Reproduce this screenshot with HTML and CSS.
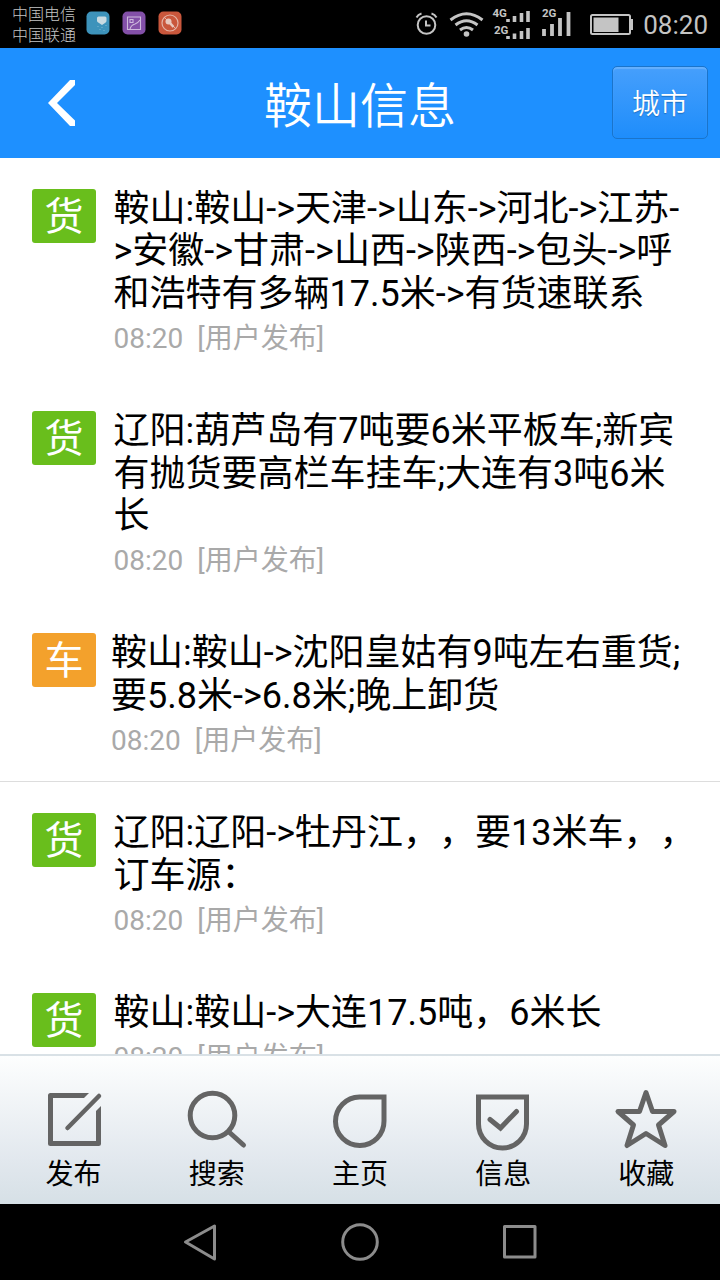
FILE: index.html
```html
<!DOCTYPE html>
<html lang="zh-CN">
<head>
    <meta charset="UTF-8">
    <meta name="viewport" content="width=device-width, initial-scale=1.0">
    <title>鞍山信息</title>
    <link rel="stylesheet" href="styles.css">
</head>
<body>
    <!-- Status Bar -->
    <div class="status-bar">
        <div class="carriers">
            <span>中国电信</span>
            <span>中国联通</span>
        </div>
        <div class="notices">
            <svg width="24" height="24" viewBox="0 0 24 24">
                <rect x="0.5" y="0.5" width="23" height="23" rx="5" fill="#3d93bb"/>
                <path d="M11 7q0-1.500 1.500-1.500h6.500q1.500 0 1.500 1.500v3q0 1-1.500 2l-3 2-3-2q-2-1-2-2z" fill="#c9dbe2"/>
                <path d="M12 15v1M16 16v1M20 14v1M14 18v1M18 19v1" stroke="#7db6d0" stroke-width="1"/>
            </svg>
            <svg width="24" height="24" viewBox="0 0 24 24">
                <rect x="0.5" y="0.5" width="23" height="23" rx="5" fill="#8350a8"/>
                <path d="M5.500 6h13v12.500h-13zM8 8.500h3v3H8zM8 18q1-4 5-5 3-1 5-4" fill="none" stroke="#cdb9dc" stroke-width="1.100"/>
            </svg>
            <svg width="24" height="24" viewBox="0 0 24 24">
                <rect x="0.5" y="0.5" width="23" height="23" rx="5" fill="#c9573c"/>
                <circle cx="12" cy="12" r="8" fill="none" stroke="#e3b3a6" stroke-width="1.200"/>
                <path d="M6 6l12 12" stroke="#e3b3a6" stroke-width="1"/>
                <circle cx="10.500" cy="10.500" r="3" fill="#e8c8be"/>
                <path d="M12 12l3.500 4" stroke="#e8c8be" stroke-width="2.500"/>
            </svg>
        </div>
        <div class="signals">
            <svg width="178" height="48" viewBox="0 0 178 48" fill="none" stroke="#c4c4c4">
                <!-- alarm -->
                <circle cx="12.500" cy="25" r="8.800" stroke-width="2"/>
                <path d="M12 20.500v5h4.500" stroke-width="2"/>
                <path d="M2.500 17.500q1.500-3 5-4M22.500 17.500q-1.500-3-5-4" stroke-width="2"/>
                <!-- wifi -->
                <g stroke-width="3">
                    <path d="M36.500 20q16-12.500 32 0"/>
                    <path d="M41.500 25q11-8.500 22 0"/>
                    <path d="M46 30q6.500-5 13 0"/>
                </g>
                <circle cx="52.500" cy="34" r="2.800" fill="#c4c4c4" stroke="none"/>
                <!-- signal bars -->
                <path d="M94 22v-3M100.500 22v-6M107.500 22v-9M114 22v-11M94 39v-3M100.500 39v-5.500M107.500 39v-8M114 39v-11" stroke-width="3.600"/>
                <path d="M130 36v-7M138 36v-12M146 36v-18M154.500 36v-24" stroke-width="3.800"/>
                <g fill="#c4c4c4" stroke="none" class="net">
                    <text x="78.500" y="17">4G</text>
                    <text x="80" y="34">2G</text>
                    <text x="128" y="17">2G</text>
                </g>
            </svg>
            <svg width="44" height="22" viewBox="0 0 44 22">
                <rect x="1" y="1" width="39" height="19" rx="1.500" fill="none" stroke="#c4c4c4" stroke-width="2"/>
                <rect x="3.500" y="3.500" width="25" height="14.500" fill="#c4c4c4"/>
                <rect x="40.500" y="5" width="2.500" height="11" fill="#c4c4c4"/>
            </svg>
            <span class="clock">08:20</span>
        </div>
    </div>

    <!-- Header -->
    <header class="header">
        <a class="back" href="#">
            <svg width="28" height="48" viewBox="0 0 28 48">
                <path d="M0 24L22 1h5v5L9 24l18 17.500V47h-5z" fill="#fff"/>
            </svg>
        </a>
        <h1>鞍山信息</h1>
        <a class="city" href="#">城市</a>
    </header>

    <!-- Message List -->
    <div class="list">
        <div class="item">
            <span class="tag">货</span>
            <div class="info">
                <p>鞍山:鞍山-&gt;天津-&gt;山东-&gt;河北-&gt;江苏-<br>&gt;安徽-&gt;甘肃-&gt;山西-&gt;陕西-&gt;包头-&gt;呼<br>和浩特有多辆17.5米-&gt;有货速联系</p>
                <div class="meta"><span>08:20</span><span>[用户发布]</span></div>
            </div>
        </div>
        <div class="item">
            <span class="tag">货</span>
            <div class="info">
                <p>辽阳:葫芦岛有7吨要6米平板车;新宾<br>有抛货要高栏车挂车;大连有3吨6米<br>长</p>
                <div class="meta"><span>08:20</span><span>[用户发布]</span></div>
            </div>
        </div>
        <div class="item car">
            <span class="tag">车</span>
            <div class="info">
                <p>鞍山:鞍山-&gt;沈阳皇姑有9吨左右重货;<br>要5.8米-&gt;6.8米;晚上卸货</p>
                <div class="meta"><span>08:20</span><span>[用户发布]</span></div>
            </div>
        </div>
        <div class="item">
            <span class="tag">货</span>
            <div class="info">
                <p>辽阳:辽阳-&gt;牡丹江，，要13米车，，<br>订车源：</p>
                <div class="meta"><span>08:20</span><span>[用户发布]</span></div>
            </div>
        </div>
        <div class="item">
            <span class="tag">货</span>
            <div class="info">
                <p>鞍山:鞍山-&gt;大连17.5吨，6米长</p>
                <div class="meta"><span>08:20</span><span>[用户发布]</span></div>
            </div>
        </div>
    </div>

    <!-- Tab Bar -->
    <nav class="tabs">
        <a href="#">
            <svg viewBox="0 0 64 64">
                <path d="M40 7.500H8.500v48h48V23" stroke-linejoin="round"/>
                <path d="M38 5h9l-5 5h-4z" fill="#646464" stroke="none"/>
                <path d="M54 23l5-5v6h-5z" fill="#646464" stroke="none"/>
                <path d="M25.500 40L57 8" stroke-linecap="round" stroke-width="4.500"/>
            </svg>
            <span>发布</span>
        </a>
        <a href="#">
            <svg viewBox="0 0 64 64">
                <circle cx="27.500" cy="27.500" r="22.300"/>
                <path d="M44 44L58.500 57" stroke-linecap="round"/>
            </svg>
            <span>搜索</span>
        </a>
        <a href="#">
            <svg viewBox="0 0 64 64">
                <path d="M31.500 9h24.500v24A24.250 24.250 0 1 1 31.500 9z"/>
            </svg>
            <span>主页</span>
        </a>
        <a href="#">
            <svg viewBox="0 0 64 64">
                <path d="M7.500 9h48v27a24 24 0 0 1-48 0z"/>
                <path d="M19 31.500l10.500 8.500 16-16.500" stroke-linecap="round"/>
            </svg>
            <span>信息</span>
        </a>
        <a href="#">
            <svg viewBox="0 0 64 64">
                <path d="M32 4.500L38.500 23.500H60L44.500 37l6.500 20.500-19-12-19 12L19.500 37 4 23.500H25.500z" stroke-linejoin="round"/>
            </svg>
            <span>收藏</span>
        </a>
    </nav>

    <!-- System Keys -->
    <div class="keys">
        <svg width="36" height="40" viewBox="0 0 36 40"><path d="M3.500 20L32.500 4v33z"/></svg>
        <svg width="40" height="40" viewBox="0 0 40 40"><circle cx="20" cy="20" r="17.300"/></svg>
        <svg width="36" height="40" viewBox="0 0 36 40"><rect x="2.500" y="4.500" width="30.500" height="30.500"/></svg>
    </div>
</body>
</html>
```
FILE: styles.css
```css
/* Global Styles */
body {
    margin: 0;
    width: 720px;
    height: 1280px;
    display: flex;
    flex-direction: column;
    overflow: hidden;
    background-color: #ffffff;
    color: #000000;
    font-family: Roboto, 'Noto Sans CJK SC', sans-serif;
}

a {
    color: inherit;
    text-decoration: none;
}

svg {
    display: block;
}

/* Status Bar */
.status-bar {
    height: 48px;
    flex: none;
    display: flex;
    background-color: #000000;
    color: #c4c4c4;
}

.carriers {
    display: flex;
    flex-direction: column;
    width: 74px;
    padding: 4px 0 0 12px;
    font-size: 16px;
    line-height: 21px;
    font-weight: 300;
}

.notices {
    display: flex;
    gap: 12px;
    padding-top: 11px;
}

.signals {
    display: flex;
    align-items: center;
    margin-left: auto;
    padding-right: 12px;
}

.signals svg {
    margin-right: 1px;
}

.signals svg + svg {
    margin: 1px 9px 0 -3px;
}

.net {
    font-size: 11.5px;
    font-weight: 700;
}

.clock {
    font-size: 26px;
    line-height: 48px;
    padding-top: 1px;
}

/* Header */
.header {
    height: 110px;
    flex: none;
    display: flex;
    justify-content: space-between;
    align-items: center;
    background-color: #1e90ff;
    color: #ffffff;
}

.back {
    width: 60px;
    padding-left: 48px;
}

.header h1 {
    margin: 0;
    padding-bottom: 3px;
    font-size: 48px;
    font-weight: 350;
}

.city {
    box-sizing: border-box;
    width: 96px;
    height: 73px;
    margin: 0 12px 1px 0;
    border: 1px solid #1a74cb;
    border-radius: 5px;
    background: linear-gradient(#469ffc, #1e8dfb);
    box-shadow: inset 0 2px 1px #66b0fd;
    text-align: center;
    font-size: 28px;
    line-height: 75px;
    text-shadow: 0 1px 1px #1a6fc0;
    font-weight: 350;
}

/* Message List */
.list {
    flex: 1;
    overflow: hidden;
}

.item {
    display: flex;
    padding: 29px 0 29px 32px;
}

.tag {
    width: 64px;
    height: 54px;
    margin: 2px 17.5px 0 0;
    flex: none;
    border-radius: 3px;
    background-color: #69be1c;
    color: #ffffff;
    text-align: center;
    font-size: 39px;
    line-height: 56px;
}

.info p {
    margin: 0;
    padding-top: 1px;
    font-size: 36px;
    line-height: 42.4px;
    white-space: nowrap;
    text-spacing-trim: space-all;
}

.meta {
    display: flex;
    gap: 14px;
    padding-top: 12px;
    color: #a9a9a9;
    font-size: 28px;
    line-height: 24px;
}

.car {
    padding-bottom: 28px;
    border-bottom: 1px solid #dddddd;
}

.car .tag {
    margin-right: 15px;
    background-color: #f3a12c;
}

/* Tab Bar */
.tabs {
    height: 148px;
    flex: none;
    display: flex;
    padding: 0 2px;
    border-top: 2px solid #d9e1e6;
    background: linear-gradient(#fdfefe, #e2e8ee 70%, #d6e0e6);
}

.tabs a {
    width: 20%;
    padding-top: 31px;
    display: flex;
    flex-direction: column;
    align-items: center;
    font-size: 28px;
    line-height: 44px;
}

.tabs svg {
    width: 64px;
    height: 66px;
    fill: none;
    stroke: #646464;
    stroke-width: 5;
}

/* System Keys */
.keys {
    height: 76px;
    flex: none;
    display: flex;
    justify-content: center;
    align-items: center;
    gap: 122px;
    background-color: #000000;
}

.keys svg {
    fill: none;
    stroke: #8c8c8c;
    stroke-width: 3;
    stroke-linejoin: round;
}
```
